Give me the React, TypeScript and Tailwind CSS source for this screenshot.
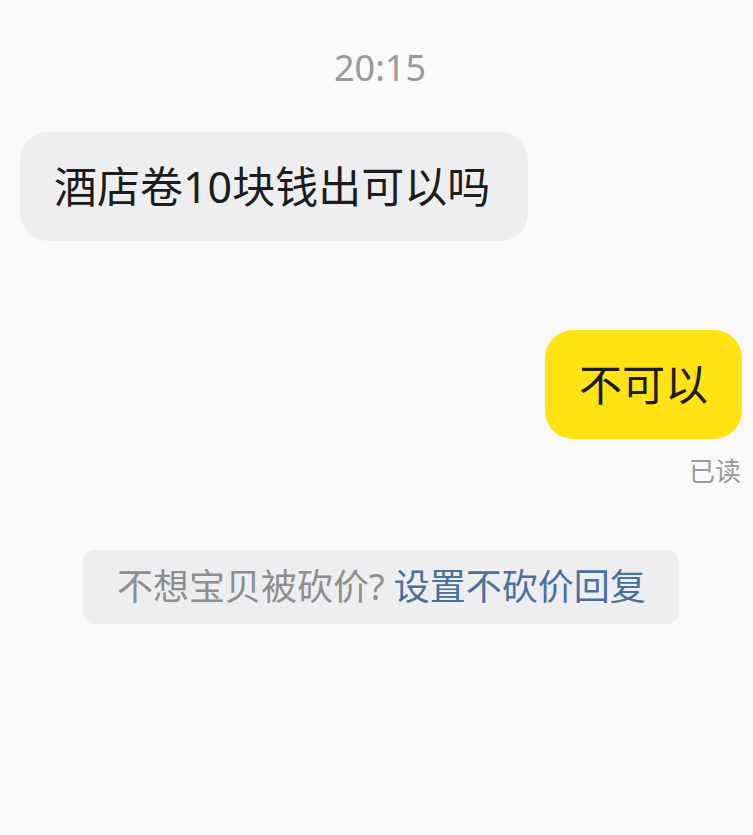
import React from "react";

const font = { fontFamily: '"Noto Sans", "Noto Sans CJK SC", sans-serif' };

export default function App() {
  return (
    <div className="w-[753px] h-[835px] bg-[#f9f9f9] overflow-hidden flex flex-col" style={font}>
      <div className="mt-[46px] h-[44px] leading-[44px] text-[36px] text-[#9a9a9a] text-center pl-[7px]">20:15</div>
      <div className="mt-[42px] ml-[20px] self-start h-[109px] flex items-center pl-[34px] pr-[38px] rounded-[28px] bg-[#eeeef0] text-[43px] text-[#1c1c1c] leading-none">
        酒店卷10块钱出可以吗
      </div>
      <div className="mt-[89px] mr-[11px] self-end h-[109px] flex items-center px-[34px] rounded-[28px] bg-[#ffe312] text-[43px] text-[#1c1c1c] leading-none">
        不可以
      </div>
      <div className="mt-[16px] mr-[12px] self-end h-[32px] leading-[32px] text-[26px] text-[#9a9a9a]">已读</div>
      <div className="mt-[63px] ml-[83px] w-[596px] h-[74px] flex items-center px-[34px] rounded-[12px] bg-[#eeeef0] text-[36px] leading-none whitespace-nowrap">
        <span className="text-[#8e8e8e]">不想宝贝被砍价?</span>
        <span className="ml-[9px] text-[#4a719c]">设置不砍价回复</span>
      </div>
    </div>
  );
}
